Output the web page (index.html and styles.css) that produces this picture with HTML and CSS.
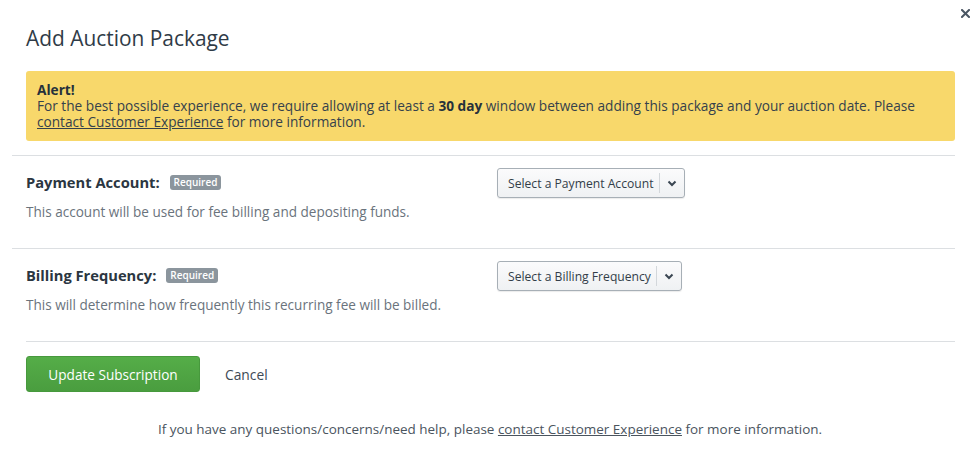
FILE: index.html
```html
<!DOCTYPE html>
<html>
<head>
<meta charset="utf-8">
<link rel="stylesheet" href="styles.css">
</head>
<body>
<div class="modal">
  <button class="close" aria-label="Close">
    <svg width="9" height="9" viewBox="0 0 9 9"><path d="M1 1L8 8M8 1L1 8" stroke="#4a5663" stroke-width="2" stroke-linecap="square"/></svg>
  </button>
  <h1 class="title">Add Auction Package</h1>
  <div class="alert">
    <strong>Alert!</strong><br>
    For the best possible experience, we require allowing at least a <strong>30 day</strong> window between adding this package and your auction date. Please <a href="#">contact Customer Experience</a> for more information.
  </div>
  <div class="field">
    <div class="field-info">
      <div class="label">Payment Account: <span class="badge">Required</span></div>
      <p class="desc">This account will be used for fee billing and depositing funds.</p>
    </div>
    <div class="select">
      <span class="select-text">Select a Payment Account</span>
      <span class="select-arrow"><svg width="10" height="7" viewBox="0 0 10 7"><path d="M1.5 1.5L5 5L8.5 1.5" fill="none" stroke="#3a4652" stroke-width="2"/></svg></span>
    </div>
  </div>
  <div class="field">
    <div class="field-info">
      <div class="label">Billing Frequency: <span class="badge">Required</span></div>
      <p class="desc">This will determine how frequently this recurring fee will be billed.</p>
    </div>
    <div class="select">
      <span class="select-text">Select a Billing Frequency</span>
      <span class="select-arrow"><svg width="10" height="7" viewBox="0 0 10 7"><path d="M1.5 1.5L5 5L8.5 1.5" fill="none" stroke="#3a4652" stroke-width="2"/></svg></span>
    </div>
  </div>
  <div class="actions">
    <button class="btn-primary">Update Subscription</button>
    <a class="cancel" href="#">Cancel</a>
  </div>
  <p class="footer">If you have any questions/concerns/need help, please <a href="#">contact Customer Experience</a> for more information.</p>
</div>
</body>
</html>
```

FILE: styles.css
```css
* { box-sizing: border-box; }
html, body { margin: 0; padding: 0; background: #fff; }
body {
  font-family: "Open Sans", "Liberation Sans", sans-serif;
  color: #2f3b47;
  font-size: 13.5px;
}
.modal {
  position: relative;
  width: 980px;
  height: 462px;
  padding: 24px 25px 0 26px;
}
.close {
  position: absolute;
  top: 9px;
  right: 10px;
  border: 0;
  background: none;
  padding: 0;
  width: 9px;
  height: 9px;
  display: flex;
}
.title {
  margin: 0;
  font-size: 20.9px;
  font-weight: 400;
  line-height: 28px;
  color: #2f3b47;
}
.alert {
  margin-top: 19px;
  height: 70px;
  background: #f8d86b;
  border-radius: 3px;
  padding: 11px 11px;
  line-height: 16px;
  font-size: 13.65px;
  color: #35414c;
}
.alert strong { font-weight: 700; color: #26313b; }
.alert a, .footer a { color: inherit; text-decoration: underline; }
.field {
  margin: 14px 0 0 -14px;
  padding: 11px 0 0 14px;
  border-top: 1px solid #dcdfe2;
  display: flex;
  width: 943px;
  height: 93px;
}
.field + .field { margin-top: 0; }
.field-info { width: 471px; flex: none; }
.label {
  font-weight: 700;
  font-size: 14.7px;
  line-height: 20px;
  margin-top: 5px;
  color: #2b3641;
  display: flex;
  align-items: center;
}
.badge {
  display: inline-block;
  margin-left: 10px;
  background: #8b959d;
  color: #fff;
  font-size: 10px;
  font-weight: 600;
  padding: 0 4px;
  border-radius: 3px;
  line-height: 15px;
  height: 15px;
}
.desc {
  margin: 11px 0 0;
  line-height: 18px;
  color: #6a737c;
  font-size: 13.55px;
}
.select {
  margin-top: 1px;
  display: flex;
  align-items: center;
  height: 30px;
  border: 1px solid #a7afb6;
  border-radius: 3px;
  background: linear-gradient(#fbfbfc, #eff1f3);
  box-shadow: 0 1px 1px rgba(0,0,0,0.08);
  font-size: 12.15px;
  color: #333e49;
}
.select-text { padding: 0 5px 0 10px; white-space: nowrap; }
.select-arrow {
  border-left: 1px solid #d3d7db;
  height: 20px;
  width: 25px;
  display: flex;
  align-items: center;
  justify-content: center;
}
.actions {
  border-top: 1px solid #dcdfe2;
  width: 929px;
  padding-top: 14px;
  display: flex;
  align-items: center;
}
.btn-primary {
  width: 174px;
  height: 36px;
  border: 1px solid #47993d;
  border-radius: 3px;
  background: linear-gradient(#55ad48, #4a9d3f);
  color: #fff;
  font-family: inherit;
  font-size: 13.6px;
  font-weight: 400;
  padding: 0;
}
.cancel {
  margin-left: 25px;
  color: #3e4a55;
  text-decoration: none;
  font-size: 13.8px;
}
.footer {
  margin: 28px 0 0 -26px;
  width: 980px;
  text-align: center;
  color: #4a545e;
  font-size: 13.48px;
  line-height: 18px;
}
```
